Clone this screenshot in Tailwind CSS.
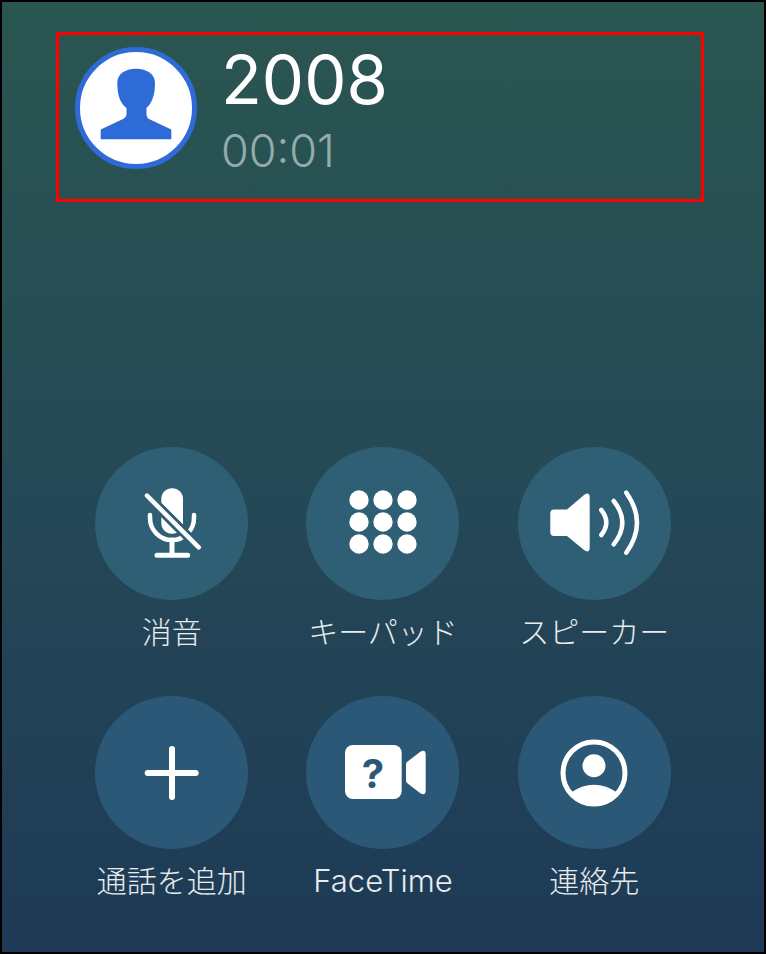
<!DOCTYPE html>
<html lang="ja">
<head>
  <meta charset="UTF-8" />
  <title>通話中</title>
  <script src="https://cdn.jsdelivr.net/npm/@tailwindcss/browser@4"></script>
</head>
<body class="bg-black">
  <div class="w-[766px] h-[954px] border-2 border-black bg-gradient-to-b from-[#2a5650] via-[#264a56] via-46% to-[#1e3a56] font-['Inter','Noto_Sans_CJK_JP',sans-serif] text-white overflow-hidden">

    <!-- header -->
    <div class="ml-[54px] mt-[30px] w-[648px] h-[170px] border-[3px] border-[#ff0000] flex items-start">
      <div class="ml-[16px] mt-[12px] w-[122px] h-[122px] rounded-full bg-white border-[5px] border-[#2f6bd6] shrink-0">
        <svg viewBox="5 5 112 112" class="w-full h-full" fill="#2f6bd6">
          <path d="M61 21.7C72 21.7 80 27 80 36C80 48 77 56 71.5 61V68Q72 71 74 72L96.3 82.5V92.3H25.7V82.5L48 72Q51.5 70 51.5 67V61C45 56 42.3 48 42.3 36C42.3 27 50 21.7 61 21.7Z"/>
        </svg>
      </div>
      <div class="ml-[24px] mt-[5px]">
        <div class="text-[67px] leading-[80px] font-normal">2008</div>
        <div class="text-[45px] leading-[56px] font-light text-[#94aaae] mt-[3px]">00:01</div>
      </div>
    </div>

    <!-- buttons -->
    <div class="ml-[64px] mt-[245px] w-[634px] grid grid-cols-3 gap-y-[44px] text-center text-[30px] leading-[40px] font-light text-white/90">
      <div class="flex flex-col items-center gap-[12px]">
        <div class="w-[153px] h-[153px] rounded-full bg-[#2e5f74] flex items-center justify-center">
          <svg viewBox="0 0 100 100" class="w-[100px] h-[100px]" fill="#fff" stroke-linecap="round">
            <path d="M39.3 29V25a10.85 10.85 0 0 1 21.7 0V50.7Z"/>
            <path d="M39.3 43L55 58.7A10.85 10.85 0 0 1 39.3 50Z"/>
            <path d="M28 41V44A22 22 0 0 0 72 44V41" fill="none" stroke="#fff" stroke-width="4.5"/>
            <path d="M25 21.7L76.7 73.3" stroke="#2e5f74" stroke-width="10"/>
            <path d="M25 21.7L76.7 73.3" stroke="#fff" stroke-width="4.5"/>
            <path d="M50 66V81M35 81.3H65.7" fill="none" stroke="#fff" stroke-width="5"/>
          </svg>
        </div>
        <span>消音</span>
      </div>
      <div class="flex flex-col items-center gap-[12px]">
        <div class="w-[153px] h-[153px] rounded-full bg-[#2e5f74] flex items-center justify-center">
          <svg viewBox="0 0 100 100" class="w-[100px] h-[100px]" fill="#fff">
            <circle cx="26" cy="26" r="9.7"/><circle cx="50" cy="26" r="9.7"/><circle cx="74" cy="26" r="9.7"/>
            <circle cx="26" cy="48" r="9.7"/><circle cx="50" cy="48" r="9.7"/><circle cx="74" cy="48" r="9.7"/>
            <circle cx="26" cy="70" r="9.7"/><circle cx="50" cy="70" r="9.7"/><circle cx="74" cy="70" r="9.7"/>
          </svg>
        </div>
        <span>キーパッド</span>
      </div>
      <div class="flex flex-col items-center gap-[12px]">
        <div class="w-[153px] h-[153px] rounded-full bg-[#2e5f74] flex items-center justify-center">
          <svg viewBox="0 0 100 100" class="w-[100px] h-[100px]" fill="#fff">
            <path d="M10 35.5H23L40 21Q45.7 17 45.7 24V73Q45.7 80 40 76L23 62H10Q6.3 62 6.3 58V39.5Q6.3 35.5 10 35.5Z"/>
            <g fill="none" stroke="#fff" stroke-width="4.5" stroke-linecap="round">
              <path d="M57.3 36Q67.3 48.5 57.3 61"/>
              <path d="M69.7 27Q87 48.6 69.7 70.3"/>
              <path d="M82.3 18.7Q103.7 48.7 82.3 78.7"/>
            </g>
          </svg>
        </div>
        <span>スピーカー</span>
      </div>
      <div class="flex flex-col items-center gap-[12px]">
        <div class="w-[153px] h-[153px] rounded-full bg-[#2c5878] flex items-center justify-center">
          <svg viewBox="0 0 100 100" class="w-[100px] h-[100px]" fill="none" stroke="#fff" stroke-width="6" stroke-linecap="round">
            <path d="M25.7 50H73.7M50 26V74"/>
          </svg>
        </div>
        <span>通話を追加</span>
      </div>
      <div class="flex flex-col items-center gap-[12px]">
        <div class="w-[153px] h-[153px] rounded-full bg-[#2c5878] flex items-center justify-center">
          <svg viewBox="0 0 100 100" class="w-[100px] h-[100px]" fill="#fff">
            <rect x="12" y="22" width="56.7" height="54" rx="8"/>
            <path d="M73 41Q73 40 74 39L87 29Q92.7 25.5 92.7 32V67Q92.7 73.5 87 70L74 60Q73 59 73 58Z"/>
            <text x="40" y="65" text-anchor="middle" font-size="40" font-weight="700" fill="#2c5878">?</text>
          </svg>
        </div>
        <span class="text-[31px]">FaceTime</span>
      </div>
      <div class="flex flex-col items-center gap-[12px]">
        <div class="w-[153px] h-[153px] rounded-full bg-[#2c5878] flex items-center justify-center">
          <svg viewBox="0 0 100 100" class="w-[100px] h-[100px]" fill="#fff">
            <circle cx="50" cy="50" r="31" fill="none" stroke="#fff" stroke-width="5"/>
            <circle cx="50" cy="42.7" r="11.5"/>
            <path d="M26 70Q50 53.4 74 70A31 31 0 0 1 26 70Z"/>
          </svg>
        </div>
        <span>連絡先</span>
      </div>
    </div>
  </div>
</body>
</html>
